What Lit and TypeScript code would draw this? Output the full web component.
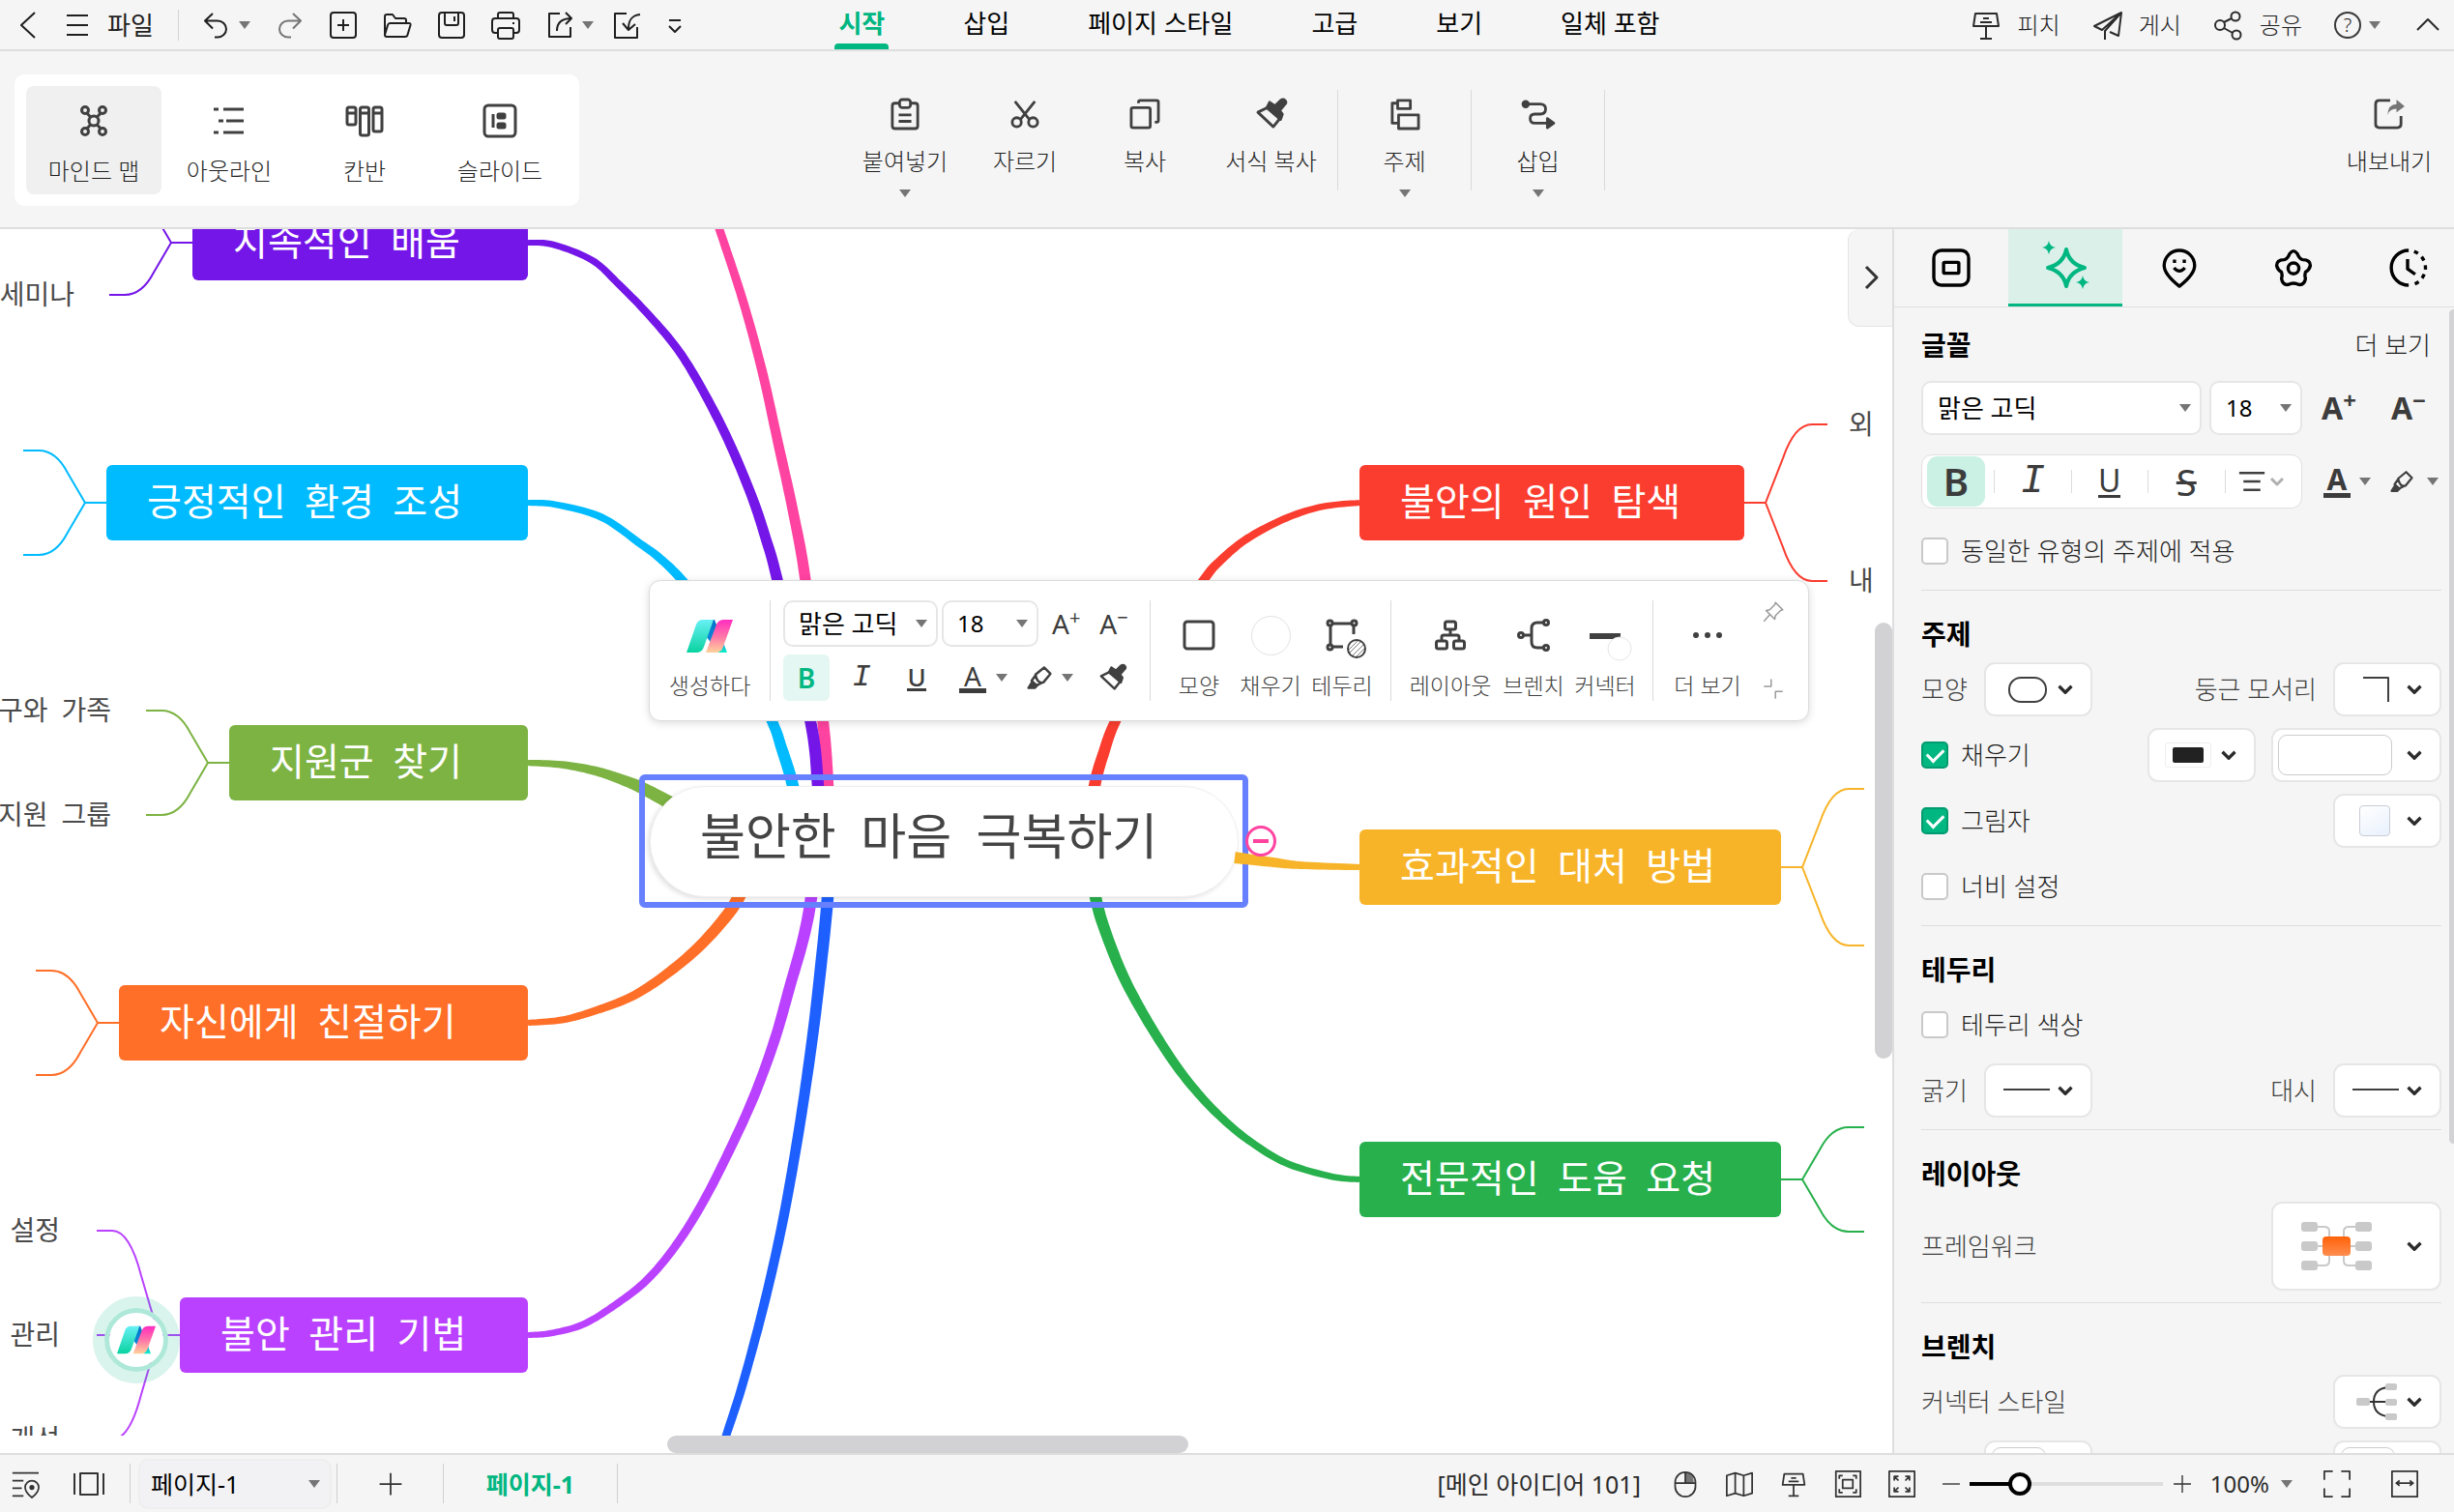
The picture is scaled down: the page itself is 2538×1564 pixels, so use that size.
import { LitElement, html, css, svg, nothing } from "lit";
import { customElement } from "lit/decorators.js";
import { styleMap } from "lit/directives/style-map.js";
import { classMap } from "lit/directives/class-map.js";

/* ---------- icons (32 x 32 grid, drawn with currentColor) ---------- */

const ICONS: Record<string, unknown> = {
  back: svg`<path d="M23 3 9 16l14 13" />`,
  menu: svg`<path d="M5 6h22M5 16h22M5 26h22" />`,
  undo: svg`<path d="M12 4 4 11.500l8 8M4.500 11.500H17a9 8.500 0 0 1 0 17h-3" />`,
  redo: svg`<path d="m20 4 8 7.500-8 8M27.500 11.500H15a9 8.500 0 0 0 0 17h3" />`,
  add: svg`<rect x="3" y="3" width="26" height="26" rx="3" /><path d="M16 10v12M10 16h12" />`,
  folder: svg`<path d="M3 27V7q0-2 2-2h6l3 4h9q2 0 2 2v3M3 26l3-10q.600-2 2.500-2H28q2 0 1.500 2l-3 10q-.500 2-2.500 2H5q-2 0-2-2" />`,
  save: svg`<rect x="3" y="3" width="26" height="26" rx="3" /><path d="M9 3v11q0 2 2 2h10q2 0 2-2V3M19 7v5" />`,
  print: svg`<path d="M8 9V5q0-2 2-2h12q2 0 2 2v4M8 24H5q-3 0-3-3v-9q0-3 3-3h22q3 0 3 3v9q0 3-3 3h-3M24 13v2" /><rect x="8" y="19" width="16" height="11" rx="2" />`,
  shareOut: svg`<path d="M16 4H5v24h22V18M13 22c0-8 4-13 15-13M22 3l6 6-6 6" />`,
  importIn: svg`<path d="M16 4H4v25h23V18M30 5C21 6 18 11 18 20M12 14l6 7 7-6" />`,
  more: svg`<path d="M10 11h12M10 17l6 6 6-6" />`,
  pitch: svg`<path d="M5 4h22l2 13H3zM16 17v13M10 30h12M13 9h6M10 13h12" />`,
  plane: svg`<path d="M30 3 2 17l8 4zM30 3 13 22v9M30 3l-3 24-9-4" />`,
  share: svg`<circle cx="7" cy="16" r="5" /><circle cx="23" cy="7" r="4.500" /><circle cx="24" cy="26" r="4.500" /><path d="m11 13 8-4M11 19l9 5" />`,
  up: svg`<path d="m5 21 11-11 11 11" />`,
  right: svg`<path d="m11 5 11 11-11 11" />`,
  mindmap: svg`<circle cx="16" cy="16" r="5" /><circle cx="7" cy="5" r="3.500" /><circle cx="25" cy="5" r="3.500" /><circle cx="7" cy="27" r="3.500" /><circle cx="25" cy="27" r="3.500" /><path d="m9 8 3.500 4M23 8l-3.500 4M9 24l3.500-4M23 24l-3.500-4" />`,
  outline: svg`<path d="M0 4h5M10 4h21M5 16h5M13 16h18M0 28h5M10 28h21" />`,
  kanban: svg`<rect x="-2" y="2" width="9" height="18" rx="2" /><rect x="11.500" y="2" width="9" height="29" rx="2" /><rect x="25" y="2" width="9" height="25" rx="2" /><path d="M-2 8h9M11.500 8h9M25 8h9" />`,
  slide: svg`<rect x="0" y="0" width="32" height="32" rx="4" /><path d="M9 9v14" /><g class="solid"><rect x="14" y="9" width="7" height="4" rx="1" /><rect x="14" y="19" width="7" height="4" rx="1" /></g>`,
  paste: svg`<path d="M10 4H5q-3 0-3 3v22q0 3 3 3h22q3 0 3-3V7q0-3-3-3h-5" /><rect x="10" y="0" width="12" height="9" rx="3" /><path d="M9 17h14M9 24h14" />`,
  cut: svg`<path d="M5 2 21 22M27 2 11 22" /><circle cx="7" cy="25" r="5" /><circle cx="25" cy="25" r="5" />`,
  copy: svg`<rect x="1" y="9" width="21" height="22" rx="2" /><path d="M9 4V3q0-2 2-2h18q2 0 2 2v20q0 2-2 2h-2" />`,
  brush: svg`<path d="m1 14 10-5 15 11-8 10z" /><path class="fill" d="m11 9 3-6 6 4 6-6q3-2 5 0t0 4l-6 7 3 4-2 6z" />`,
  topic: svg`<rect x="8" y="1" width="14" height="9" /><path d="M8 4H2v22h6" /><rect x="9" y="17" width="22" height="15" />`,
  connector: svg`<circle class="fill" cx="2" cy="5" r="3" /><path d="M3 5h15q6 0 6 5.500T18 16h-6q-5 0-5 5t5 5h14" /><path class="fill" d="m26 21 7 5-7 5z" />`,
  exportBox: svg`<path d="M17 1H5Q1 1 1 5v22q0 4 4 4h20q4 0 4-4V18" /><path class="soft" d="M14 17q1-12 10-12V0l9 7.500-9 6.500v-4q-8 0-10 7z" />`,
  frame: svg`<rect x="0" y="0" width="32" height="32" rx="7" /><rect x="9" y="11" width="14" height="10" rx="1" />`,
  pin: svg`<path d="M16 33Q2 22 2 14a14 14 0 0 1 28 0q0 8-14 19z" /><path d="M11.500 8.500v3M20.500 8.500v3M11 16q5 6 10 0" />`,
  flower: svg`<path d="M12.500 3Q16-2 19.500 3q2 5 5 5.500 7 0 7 5.500-1 4-4.500 6-1 3 0 6-1 6-6 5.500-5-2.500-10 0-5 .500-6-5.500 1-3 0-6-3.500-2-4.500-6 0-5.500 7-5.500 3-.500 5-5.500z" /><circle cx="16" cy="16.500" r="5" />`,
  clock: svg`<path d="M17 0a16 16 0 0 0 0 32M16 8v9l7 5" /><path stroke-dasharray="4 4.500" d="M22 1a16 16 0 0 1 0 30" />`,
  box: svg`<rect x="1" y="2" width="30" height="28" rx="3" />`,
  tree: svg`<rect x="10.500" y="2" width="11" height="8" rx="2" /><rect x="1.500" y="22" width="11" height="8" rx="2" /><rect x="19.500" y="22" width="11" height="8" rx="2" /><path d="M16 10v6M7 22v-4q0-2 2-2h14q2 0 2 2v4" />`,
  branch: svg`<circle cx="3" cy="16" r="2.500" /><circle cx="29" cy="3" r="2.500" /><circle cx="29" cy="29" r="2.500" /><path d="M6 16h8M26 3h-6q-6 0-6 6v14q0 6 6 6h6" />`,
  dots: svg`<g class="fill"><circle cx="4" cy="16" r="1.500" /><circle cx="16" cy="16" r="1.500" /><circle cx="28" cy="16" r="1.500" /></g>`,
  tack: svg`<path d="m19 3 10 10-3 1-7 7-1 5L6 14l5-1 7-7zM11 20l-8 9" />`,
  shrink: svg`<path d="M3 12h10V2M29 19H19v10" />`,
  pen: svg`<path d="m11 12 11-9 8 8-9 11q-8 2-10-10zM11 13l-5 7 6 6 8-4" /><path class="fill" d="M7 21 2 29h8l3-3z" />`,
  align: svg`<path d="M1 6h30M6 16h20M6 26h20" />`,
  oval: svg`<rect x="-3" y="4" width="38" height="25" rx="12" />`,
  corner: svg`<path d="M2 4h26v25" />`,
  line: svg`<path d="M-9 15h48" />`,
  chev: svg`<path d="m8 12 8 8 8-8" />`,
  mapPin: svg`<path d="M1 3h31M1 12h13M1 21h11M1 30h13" /><path d="M24 32q-8-6-8-12a8 8 0 0 1 16 0q0 6-8 12z" /><circle class="fill" cx="24" cy="20" r="2" />`,
  slides: svg`<rect x="7" y="5" width="18" height="22" /><path d="M1 5v22M31 5v22" />`,
  plus: svg`<path d="M16 3v26M3 16h26" />`,
  minus: svg`<path d="M3 16h26" />`,
  mouse: svg`<path class="soft" d="M16 2q10 1 10 13H16z" /><rect x="4" y="2" width="24" height="29" rx="12" /><path d="M4 15h24M16 2v13" />`,
  map: svg`<path d="m1 6 10-3 10 3 10-3v24l-10 3-10-3-10 3zM11 3v24M21 6v24" />`,
  fit: svg`<rect x="2" y="1" width="29" height="30" /><rect x="10" y="11" width="12" height="10" /><path d="M6 10V6h4M22 6h4v4M6 22v4h4M26 22v4h-4" />`,
  expand: svg`<rect x="1" y="1" width="30" height="30" /><path d="M7 12V7h5M7 7l5 5M20 7h5v5M25 7l-5 5M7 20v5h5M7 25l5-5M25 20v5h-5M25 25l-5-5" />`,
  full: svg`<path d="M1 11V1h10M21 1h10v10M1 21v10h10M31 21v10H21" />`,
  wide: svg`<rect x="1" y="1" width="30" height="30" /><path d="M7 15h18M10 12l-4 3 4 3M22 12l4 3-4 3" />`,
};

const icon = (name: string, cls = "") =>
  html`<svg class="ico ${cls}" viewBox="0 0 32 32" aria-hidden="true">${ICONS[name]}</svg>`;

const tri = html`<svg class="tri" viewBox="0 0 12 8" aria-hidden="true"><path d="M0 0h12L6 8z" /></svg>`;

const logo = (id: string) => html`<svg class="logo" viewBox="0 0 48 34" aria-hidden="true">
  <defs>
    <linearGradient id="${id}a" x1="0" y1="0" x2="0" y2="1"><stop offset="0" stop-color="#66f0f4" /><stop offset="1" stop-color="#0ad3a0" /></linearGradient>
    <linearGradient id="${id}b" x1="0" y1="0" x2="0" y2="1"><stop offset="0" stop-color="#0672c8" /><stop offset=".6" stop-color="#0a86d8" /><stop offset="1" stop-color="#0ef0cc" /></linearGradient>
    <linearGradient id="${id}c" x1="0" y1="0" x2="0" y2="1"><stop offset="0" stop-color="#ff2cc0" /><stop offset=".5" stop-color="#ff74a8" /><stop offset="1" stop-color="#ffd19a" /></linearGradient>
  </defs>
  <path fill="url(#${id}b)" d="M26 0h3l13 34h-9L20 17z" />
  <path fill="url(#${id}a)" d="M17 0h11L18 28q-2 6-8 6H0L10 5q2-5 7-5z" />
  <path fill="url(#${id}c)" d="M39 0h9L38 28q-2 6-8 6H20L31 5q2-5 8-5z" />
</svg>`;

const base = css`
  :host {
    display: block;
    box-sizing: border-box;
    font-family: "Noto Sans", "Noto Sans CJK KR", sans-serif;
    font-size: 24px;
    font-weight: 300;
    line-height: 32px;
    color: #1f1f1f;
  }
  * {
    box-sizing: border-box;
  }
  button,
  select {
    font: inherit;
    color: inherit;
    background: none;
    border: 0;
    padding: 0;
    margin: 0;
    white-space: nowrap;
  }
  .ico {
    width: 28px;
    height: 28px;
    flex: none;
    fill: none;
    stroke: currentColor;
    stroke-width: 2;
    stroke-linejoin: round;
    overflow: visible;
    display: block;
  }
  .ico .fill,
  .ico .solid rect {
    fill: currentColor;
  }
  .ico .soft {
    fill: #757575;
    stroke: none;
  }
  .tri {
    width: 12px;
    height: 8px;
    flex: none;
    fill: #757575;
    display: block;
  }
  .row {
    display: flex;
    align-items: center;
  }
  .pick {
    position: relative;
    display: flex;
    align-items: center;
  }
  .pick select {
    appearance: none;
    width: 100%;
    height: 100%;
    background: #fff;
    border: 2px solid #e6e6e6;
    border-radius: 10px;
    color: #000;
    font-weight: 400;
  }
  .pick .tri {
    position: absolute;
    right: 11px;
    pointer-events: none;
  }
  .glyph {
    line-height: 1;
    font-family: "Noto Sans", sans-serif;
    color: #3c3c3c;
    display: block;
  }
`;

/* ---------- title bar ---------- */

@customElement("top-bar")
export class TopBar extends LitElement {
  static styles = [
    base,
    css`
      :host {
        border-bottom: 2px solid #dedede;
      }
      header {
        display: grid;
        grid-template-columns: 1fr auto 1fr;
        height: 51px;
      }
      .ico {
        width: 32px;
        height: 32px;
      }
      .left {
        display: flex;
        align-items: center;
        padding-left: 13px;
      }
      .left button,
      .right button {
        display: flex;
        align-items: center;
      }
      .file {
        gap: 15px;
        margin-left: 19px;
        font-size: 26px;
        font-weight: 400;
      }
      .sep {
        width: 1px;
        height: 32px;
        background: #d4d4d4;
        margin: 0 23px 0 25px;
      }
      .tools {
        display: flex;
        align-items: center;
        gap: 24px;
      }
      .tools .split {
        gap: 7px;
      }
      .tools .split.wide,
      .tools .import {
        margin-right: -6px;
      }
      .dim {
        color: #757575;
      }
      nav {
        display: flex;
        gap: 81px;
        padding-left: 46px;
        font-size: 26px;
        font-weight: 400;
      }
      nav a {
        color: #000;
        text-decoration: none;
        line-height: 48px;
        height: 51px;
        position: relative;
        white-space: nowrap;
      }
      nav a.on {
        color: #00b681;
        font-weight: 700;
      }
      nav a.on::after {
        content: "";
        position: absolute;
        left: -4px;
        right: -4px;
        bottom: 0;
        height: 6px;
        background: #00b681;
        border-radius: 4px 4px 0 0;
      }
      .right {
        display: flex;
        align-items: center;
        justify-content: flex-end;
        gap: 33px;
        padding-right: 11px;
      }
      .right button {
        gap: 16px;
      }
      .right .help {
        gap: 8px;
      }
      .q {
        width: 28px;
        height: 28px;
        border: 2px solid #3a3a3a;
        border-radius: 50%;
        font-size: 20px;
        line-height: 24px;
        text-align: center;
      }
      .right .ico {
        color: #2b2b2b;
      }
    `,
  ];
  render() {
    const tabs = ["시작", "삽입", "페이지 스타일", "고급", "보기", "일체 포함"];
    return html`<header>
      <div class="left">
        <button aria-label="뒤로">${icon("back")}</button>
        <button class="file">${icon("menu")}파일</button>
        <span class="sep"></span>
        <div class="tools">
          <button class="split" aria-label="실행 취소">${icon("undo")}${tri}</button>
          <button class="dim" aria-label="다시 실행">${icon("redo")}</button>
          <button aria-label="새로 만들기">${icon("add")}</button>
          <button aria-label="열기">${icon("folder")}</button>
          <button aria-label="저장">${icon("save")}</button>
          <button aria-label="인쇄">${icon("print")}</button>
          <button class="split wide" aria-label="내보내기">${icon("shareOut")}${tri}</button>
          <button class="import" aria-label="가져오기">${icon("importIn")}</button>
          <button aria-label="더 많은 도구">${icon("more")}</button>
        </div>
      </div>
      <nav>${tabs.map((t, i) => html`<a href="#" class=${i === 0 ? "on" : ""}>${t}</a>`)}</nav>
      <div class="right">
        <button>${icon("pitch")}피치</button>
        <button>${icon("plane")}게시</button>
        <button>${icon("share")}공유</button>
        <button class="help" aria-label="도움말"><span class="q">?</span>${tri}</button>
        <button aria-label="리본 접기">${icon("up")}</button>
      </div>
    </header>`;
  }
}

/* ---------- ribbon ---------- */

@customElement("tool-ribbon")
export class ToolRibbon extends LitElement {
  static styles = [
    base,
    css`
      :host {
        border-bottom: 2px solid #dedede;
      }
      .ribbon {
        display: grid;
        grid-template-columns: 1fr auto 1fr;
        height: 182px;
        padding: 24px 15px 20px;
      }
      .views {
        justify-self: start;
        align-self: start;
        display: flex;
        padding: 12px;
        background: #fff;
        border-radius: 10px;
      }
      button {
        display: flex;
        flex-direction: column;
        align-items: center;
        color: #1f1f1f;
      }
      .ico {
        color: #404040;
        stroke-width: 3;
      }
      .views button {
        width: 140px;
        height: 112px;
        padding-top: 20px;
        gap: 20px;
        border-radius: 8px;
      }
      .views button.on {
        background: #f0f0f1;
      }
      .views .ico {
        width: 32px;
        height: 32px;
      }
      .acts {
        display: flex;
        padding: 16px 4px 0 0;
      }
      .acts button {
        width: 124px;
        height: 104px;
        padding-top: 10px;
        gap: 18px;
      }
      .acts button.fmt,
      .acts button.grp {
        width: 138px;
        border-right: 1px solid #dadada;
      }
      .acts .ico,
      .out .ico {
        width: 30px;
        height: 30px;
      }
      .acts .tri {
        margin-top: -5px;
      }
      .out {
        justify-self: end;
        width: 104px;
        padding-top: 26px;
        gap: 18px;
      }
    `,
  ];
  render() {
    const views = [["mindmap", "마인드 맵"], ["outline", "아웃라인"], ["kanban", "칸반"], ["slide", "슬라이드"]];
    const acts: [string, string, string, boolean][] = [
      ["paste", "붙여넣기", "", true],
      ["cut", "자르기", "", false],
      ["copy", "복사", "", false],
      ["brush", "서식 복사", "fmt", false],
      ["topic", "주제", "grp", true],
      ["connector", "삽입", "grp", true],
    ];
    return html`<div class="ribbon">
      <div class="views">
        ${views.map(([i, t], n) => html`<button class=${n === 0 ? "on" : ""}>${icon(i)}<span>${t}</span></button>`)}
      </div>
      <div class="acts">
        ${acts.map(([i, t, c, d]) => html`<button class=${c}>${icon(i)}<span>${t}</span>${d ? tri : nothing}</button>`)}
      </div>
      <button class="out">${icon("exportBox")}<span>내보내기</span></button>
    </div>`;
  }
}

/* ---------- mind map ---------- */

type Pt = [number, number];

/* The map is scrolled: its own coordinates start this far above the stage. */
const SCROLL_Y = 237;

/* A smooth band through the points, growing from width a to width b. */
function band(pts: Pt[], a: number, b: number): string {
  const line: Pt[] = [];
  const steps = 10;
  for (let i = 0; i < pts.length - 1; i++) {
    const p0 = pts[Math.max(i - 1, 0)];
    const p1 = pts[i];
    const p2 = pts[i + 1];
    const p3 = pts[Math.min(i + 2, pts.length - 1)];
    for (let s = i === 0 ? 0 : 1; s <= steps; s++) {
      const t = s / steps;
      const at = (k: 0 | 1) =>
        0.5 *
        (2 * p1[k] +
          (p2[k] - p0[k]) * t +
          (2 * p0[k] - 5 * p1[k] + 4 * p2[k] - p3[k]) * t * t +
          (3 * p1[k] - p0[k] - 3 * p2[k] + p3[k]) * t * t * t);
      line.push([at(0), at(1)]);
    }
  }
  const left: string[] = [];
  const right: string[] = [];
  line.forEach(([x, y], i) => {
    const [ax, ay] = line[Math.max(i - 1, 0)];
    const [bx, by] = line[Math.min(i + 1, line.length - 1)];
    const len = Math.hypot(bx - ax, by - ay) || 1;
    const half = (a + ((b - a) * i) / (line.length - 1)) / 2;
    const nx = (-(by - ay) / len) * half;
    const ny = ((bx - ax) / len) * half;
    left.push(`${(x + nx).toFixed(1)} ${(y + ny).toFixed(1)}`);
    right.unshift(`${(x - nx).toFixed(1)} ${(y - ny).toFixed(1)}`);
  });
  return `M${left.concat(right).join("L")}Z`;
}

/* A thin child branch that leaves a node's edge and ends dy above or below it. */
function twig(x: number, y: number, dir: 1 | -1, dy: number): string {
  const j = x + dir * 22;
  if (dy === 0) return `M${x} ${y}H${j + dir * 64}`;
  return `M${x} ${y}H${j}L${j + dir * 18} ${y + dy * 0.57}Q${j + dir * 30} ${y + dy} ${j + dir * 48} ${y + dy}H${j + dir * 64}`;
}

interface Topic {
  text: string;
  x: number;
  y: number;
  w: number;
  color: string;
  side: 1 | -1;
  twigs: number[];
}

const TOPICS: Topic[] = [
  { text: "지속적인 배움", x: 199, y: 212, w: 347, color: "#7416e8", side: -1, twigs: [-54, 54] },
  { text: "긍정적인 환경 조성", x: 110, y: 481, w: 436, color: "#00bbff", side: -1, twigs: [-54, 54] },
  { text: "지원군 찾기", x: 237, y: 750, w: 309, color: "#7cb342", side: -1, twigs: [-54, 54] },
  { text: "자신에게 친절하기", x: 123, y: 1019, w: 423, color: "#ff6f28", side: -1, twigs: [-54, 54] },
  { text: "불안 관리 기법", x: 186, y: 1342, w: 360, color: "#b941ff", side: -1, twigs: [-108, 0, 108] },
  { text: "불안의 원인 탐색", x: 1406, y: 481, w: 398, color: "#fb3d30", side: 1, twigs: [-81, 81] },
  { text: "효과적인 대처 방법", x: 1406, y: 858, w: 436, color: "#f7b428", side: 1, twigs: [-81, 81] },
  { text: "전문적인 도움 요청", x: 1406, y: 1181, w: 436, color: "#27b04b", side: 1, twigs: [-54, 54] },
];

const BANDS: { color: string; from: number; to: number; pts: Pt[] }[] = [
  { color: "#ff43a0", from: 8, to: 13, pts: [[737, 217], [744, 237], [768, 310], [788, 383], [804, 455], [820, 528], [833, 600], [851, 745], [856, 813], [858, 870]] },
  { color: "#7416e8", from: 6, to: 13, pts: [[546, 251], [572, 253], [612, 269], [640, 294], [673, 328], [702, 363], [727, 404], [753, 455], [777, 512], [792, 557], [804, 600], [838, 745], [846, 813], [850, 870]] },
  { color: "#00bbff", from: 6, to: 13, pts: [[546, 520], [575, 522], [622, 535], [663, 563], [683, 578], [708, 603], [762, 668], [798, 745], [808, 773], [820, 813], [830, 870]] },
  { color: "#7cb342", from: 6, to: 14, pts: [[546, 789], [581, 791], [614, 797], [642, 806], [664, 815], [694, 831]] },
  { color: "#ff6f28", from: 6, to: 14, pts: [[546, 1058], [581, 1055], [614, 1046], [653, 1031], [686, 1010], [719, 983], [746, 954], [764, 928], [785, 880]] },
  { color: "#b941ff", from: 6, to: 13, pts: [[546, 1381], [570, 1379], [603, 1370], [636, 1350], [668, 1325], [697, 1291], [724, 1249], [751, 1197], [779, 1136], [801, 1076], [817, 1020], [831, 970], [839, 928], [845, 870]] },
  { color: "#1e60ff", from: 8, to: 13, pts: [[746, 1502], [751, 1485], [768, 1432], [790, 1350], [809, 1266], [825, 1177], [838, 1090], [847, 1017], [856, 928], [858, 870]] },
  { color: "#fb3d30", from: 6, to: 13, pts: [[1406, 520], [1368, 524], [1330, 536], [1290, 557], [1262, 580], [1244, 601], [1188, 680], [1154, 745], [1142, 777], [1132, 813], [1124, 870]] },
  { color: "#27b04b", from: 6, to: 13, pts: [[1406, 1220], [1377, 1217], [1330, 1203], [1292, 1180], [1262, 1155], [1234, 1125], [1210, 1093], [1182, 1048], [1160, 1006], [1142, 960], [1133, 928], [1122, 870]] },
];

const LEAVES: { text: string; x: number; y: number; side: 1 | -1 }[] = [
  { text: "세미나", x: 77, y: 303, side: -1 },
  { text: "구와 가족", x: 115, y: 733, side: -1 },
  { text: "지원 그룹", x: 115, y: 841, side: -1 },
  { text: "설정", x: 62, y: 1271, side: -1 },
  { text: "관리", x: 62, y: 1379, side: -1 },
  { text: "개선", x: 62, y: 1487, side: -1 },
  { text: "외", x: 1912, y: 437, side: 1 },
  { text: "내", x: 1912, y: 599, side: 1 },
];

@customElement("mind-stage")
export class MindStage extends LitElement {
  static styles = [
    base,
    css`
      :host {
        position: relative;
        background: #fff;
        overflow: hidden;
      }
      .map {
        position: absolute;
        inset: 0 18px 18px 0;
        overflow: hidden;
        font-family: "Noto Sans Mono CJK KR", "Noto Sans CJK KR", sans-serif;
      }
      .links {
        position: absolute;
        inset: 0;
        width: 100%;
        height: 100%;
      }
      .topic {
        position: absolute;
        height: 78px;
        padding-left: 42px;
        border-radius: 6px;
        color: #fff;
        font-size: 39px;
        line-height: 70px;
        white-space: nowrap;
      }
      .leaf {
        position: absolute;
        height: 32px;
        font-size: 28px;
        line-height: 32px;
        color: #4a4a4a;
        white-space: nowrap;
      }
      .leaf.before {
        transform: translateX(-100%);
      }
      .root {
        position: absolute;
        left: 672px;
        top: 576px;
        width: 609px;
        height: 115px;
        padding-left: 51px;
        border-radius: 58px;
        background: #fff;
        border: 1px solid #f0f0f0;
        box-shadow: -2px 2px 5px rgba(0, 0, 0, 0.12);
        font-size: 51px;
        line-height: 96px;
        color: #444;
        white-space: nowrap;
      }
      .select {
        position: absolute;
        left: 661px;
        top: 564px;
        width: 630px;
        height: 138px;
        border: 6px solid #6680ff;
        border-radius: 6px;
      }
      .fold {
        position: absolute;
        left: 1288px;
        top: 617px;
        width: 32px;
        height: 32px;
        border: 3px solid #ff43a0;
        border-radius: 50%;
        background: #fff;
        display: grid;
        place-items: center;
      }
      .fold::before {
        content: "";
        width: 16px;
        height: 4px;
        background: #ff43a0;
      }
      .ai {
        position: absolute;
        left: 96px;
        top: 1104px;
        width: 90px;
        height: 90px;
        border: 12px solid rgba(0, 182, 129, 0.15);
        border-radius: 50%;
        padding: 0;
      }
      .ai span {
        display: grid;
        place-items: center;
        width: 66px;
        height: 66px;
        border: 5px solid #aee8d8;
        border-radius: 50%;
        background: #fff;
        background-clip: padding-box;
      }
      .logo {
        width: 40px;
        height: 30px;
      }
      .vbar,
      .hbar {
        position: absolute;
        background: #d2d2d4;
        border-radius: 9px;
      }
      .vbar {
        right: 0;
        top: 407px;
        width: 18px;
        height: 451px;
      }
      .hbar {
        left: 690px;
        bottom: 0;
        width: 539px;
        height: 18px;
      }
      .fold-panel {
        position: absolute;
        right: 0;
        top: 0;
        width: 46px;
        height: 101px;
        background: #f5f5f5;
        border: 1px solid #e4e4e4;
        border-width: 0 0 1px 1px;
        border-radius: 12px 0 0 12px;
        display: grid;
        place-items: center;
        color: #333;
      }
      .fold-panel .ico {
        width: 32px;
        height: 32px;
        stroke-width: 3;
      }
    `,
  ];
  render() {
    return html`
      <div class="map">
        <svg class="links" aria-hidden="true">
          <g transform="translate(0 ${-SCROLL_Y})">
            ${TOPICS.map((t) =>
              t.twigs.map(
                (d) =>
                  svg`<path d=${twig(t.side < 0 ? t.x : t.x + t.w, t.y + 39, t.side, d)} fill="none" stroke=${t.color} stroke-width="2" />`
              )
            )}
            ${BANDS.map((b) => svg`<path d=${band(b.pts, b.from, b.to)} fill=${b.color} />`)}
          </g>
        </svg>
        ${TOPICS.map(
          (t) => html`<div
            class="topic"
            style=${styleMap({ left: `${t.x}px`, top: `${t.y - SCROLL_Y}px`, width: `${t.w}px`, background: t.color })}
          >${t.text}</div>`
        )}
        ${LEAVES.map(
          (l) => html`<div
            class=${classMap({ leaf: true, before: l.side < 0 })}
            style=${styleMap({ left: `${l.x}px`, top: `${l.y - SCROLL_Y - 16}px` })}
          >${l.text}</div>`
        )}
        <div class="select"></div>
        <div class="root">불안한 마음 극복하기</div>
        <svg class="links" aria-hidden="true">
          <path
            transform="translate(0 ${-SCROLL_Y})"
            d=${band([[1406, 897], [1345, 895], [1317, 892], [1277, 887]], 6, 12)}
            fill="#f7b428"
          />
        </svg>
        <button class="fold" aria-label="가지 접기"></button>
        <button class="ai" aria-label="AI 도우미"><span>${logo("m")}</span></button>
      </div>
      <div class="vbar"></div>
      <div class="hbar"></div>
      <button class="fold-panel" aria-label="패널 접기">${icon("right")}</button>
      <float-bar></float-bar>
    `;
  }
}

/* ---------- floating format bar ---------- */

@customElement("float-bar")
export class FloatBar extends LitElement {
  static styles = [
    base,
    css`
      :host {
        position: absolute;
        left: 671px;
        top: 363px;
        width: 1200px;
        height: 146px;
        padding: 20px 0;
        display: flex;
        background: #fff;
        border: 1px solid #dcdcdc;
        border-radius: 12px;
        box-shadow: 0 2px 8px rgba(0, 0, 0, 0.14);
        font-size: 23px;
        color: #404040;
      }
      .group {
        display: flex;
        border-left: 1px solid #dadada;
        height: 104px;
      }
      .tool {
        display: flex;
        flex-direction: column;
        align-items: center;
        justify-content: space-between;
        height: 104px;
        padding-top: 20px;
      }
      .tool .ico {
        stroke-width: 3;
        width: 32px;
        height: 32px;
      }
      .tool.ai {
        width: 124px;
      }
      .tool.ai .logo {
        width: 48px;
        height: 34px;
      }
      .shape .tool {
        width: 74px;
      }
      .shape {
        padding: 0 13px;
      }
      .link {
        padding: 0 12px;
      }
      .link .tool {
        width: 74px;
      }
      .link .tool.w {
        width: 98px;
      }
      .tool.more {
        width: 112px;
      }
      .text {
        flex-direction: column;
        justify-content: space-between;
        width: 393px;
        padding-left: 13px;
      }
      .row {
        height: 48px;
      }
      .pick {
        height: 48px;
      }
      .pick.f {
        width: 160px;
        margin-right: 4px;
      }
      .pick.s {
        width: 100px;
      }
      .pick select {
        padding-left: 14px;
      }
      .pick.f select {
        font-size: 26px;
      }
      .pick.s select {
        font-size: 24px;
      }
      .size {
        display: flex;
        margin-left: 14px;
        font-weight: 400;
      }
      .size + .size {
        margin-left: 20px;
      }
      .size .glyph {
        font-size: 28px;
      }
      .size .mark {
        font-size: 20px;
        line-height: 16px;
        color: #3c3c3c;
      }
      .b,
      .i,
      .u {
        width: 48px;
        height: 48px;
        display: grid;
        place-items: center;
        border-radius: 6px;
      }
      .b {
        background: #e4f7f2;
      }
      .b .glyph {
        color: #00b681;
        font-size: 28px;
        font-weight: 600;
      }
      .i {
        width: 66px;
      }
      .i .glyph {
        font: italic 32px "Liberation Mono", monospace;
        line-height: 1;
      }
      .u .glyph {
        font-size: 26px;
        font-weight: 500;
        line-height: 24px;
        border-bottom: 3px solid #3c3c3c;
      }
      .duo {
        display: flex;
        align-items: center;
        gap: 10px;
        margin-left: 20px;
        font-weight: 400;
      }
      .duo.last {
        margin-left: 28px;
      }
      .a .glyph {
        font-size: 28px;
        line-height: 26px;
        width: 28px;
        text-align: center;
        border-bottom: 5px solid #3c3c3c;
      }
      .duo .ico {
        width: 26px;
        height: 26px;
        stroke-width: 3;
      }
      .disc {
        width: 41px;
        height: 41px;
        border: 1px solid #e2e2e2;
        border-radius: 50%;
        margin-top: -4px;
      }
      .side {
        display: flex;
        flex-direction: column;
        justify-content: space-between;
        color: #9a9a9a;
      }
      .side .ico {
        width: 24px;
        height: 24px;
      }
    `,
  ];
  render() {
    return html`
      <button class="tool ai">${logo("f")}<span>생성하다</span></button>
      <div class="group text">
        <div class="row">
          <div class="pick f"><select aria-label="글꼴"><option>맑은 고딕</option></select>${tri}</div>
          <div class="pick s"><select aria-label="글꼴 크기"><option>18</option></select>${tri}</div>
          <button class="size"><span class="glyph">A</span><span class="mark">+</span></button>
          <button class="size"><span class="glyph">A</span><span class="mark">−</span></button>
        </div>
        <div class="row">
          <button class="b"><span class="glyph">B</span></button>
          <button class="i"><span class="glyph">I</span></button>
          <button class="u"><span class="glyph">U</span></button>
          <button class="duo a"><span class="glyph">A</span>${tri}</button>
          <button class="duo" aria-label="강조 색">${icon("pen")}${tri}</button>
          <button class="duo last" aria-label="서식 복사">${icon("brush")}</button>
        </div>
      </div>
      <div class="group shape">
        <button class="tool">${icon("box")}<span>모양</span></button>
        <button class="tool"><i class="disc"></i><span>채우기</span></button>
        <button class="tool">
          <svg class="ico" viewBox="0 0 32 32" aria-hidden="true">
            <path d="M4 7v18M28 7v8M7 4h18M7 28h10" />
            <circle cx="3.500" cy="3.500" r="2.500" /><circle cx="28.500" cy="3.500" r="2.500" /><circle cx="3.500" cy="28.500" r="2.500" />
            <circle cx="31" cy="30" r="9" fill="#fff" stroke-width="2" />
            <path d="m23 31 9-9M24 34l11-11M27 37l11-11M31 38l8-8" stroke="#777" stroke-width="1" />
          </svg>
          <span>테두리</span>
        </button>
      </div>
      <div class="group link">
        <button class="tool w">${icon("tree")}<span>레이아웃</span></button>
        <button class="tool">${icon("branch")}<span>브렌치</span></button>
        <button class="tool">
          <svg class="ico" viewBox="0 0 32 32" aria-hidden="true">
            <path d="M0 17h32" stroke-width="6" />
            <circle cx="31" cy="30" r="12" fill="#fff" stroke="#e6e6e6" stroke-width="1" />
          </svg>
          <span>커넥터</span>
        </button>
      </div>
      <div class="group"><button class="tool more">${icon("dots")}<span>더 보기</span></button></div>
      <div class="side">
        <button aria-label="고정">${icon("tack")}</button>
        <button aria-label="축소">${icon("shrink")}</button>
      </div>
    `;
  }
}

/* ---------- format panel ---------- */

@customElement("format-panel")
export class FormatPanel extends LitElement {
  static styles = [
    base,
    css`
      :host {
        position: relative;
        display: flex;
        flex-direction: column;
        min-height: 0;
        border-left: 2px solid #dedede;
        overflow: hidden;
        font-size: 26px;
        color: #404040;
      }
      .tabs {
        display: flex;
        flex: none;
        height: 81px;
        border-bottom: 1px solid #dedede;
      }
      .tabs button {
        flex: none;
        width: 118px;
        height: 80px;
        display: grid;
        place-items: center;
        color: #000;
      }
      .tabs .ico {
        width: 36px;
        height: 36px;
        stroke-width: 3;
      }
      .tabs button.on {
        background: #dcf0ea;
        color: #00b681;
        border-bottom: 3px solid #00b681;
      }
      .tabs .spark {
        width: 48px;
        height: 48px;
      }
      .body {
        flex: 1;
        min-height: 0;
        overflow: hidden;
        padding: 0 13px 0 28px;
      }
      section {
        padding: 22px 0 6px;
        border-bottom: 1px solid #dedede;
      }
      section.first {
        padding-top: 16px;
      }
      .head {
        display: flex;
        justify-content: space-between;
        align-items: center;
        height: 46px;
        padding-right: 11px;
      }
      .first .head {
        margin-bottom: 4px;
      }
      h3 {
        margin: 0;
        font-size: 28px;
        font-weight: 700;
        color: #000;
      }
      .head a {
        color: #1f1f1f;
        text-decoration: none;
      }
      .line {
        display: flex;
        align-items: center;
        min-height: 68px;
      }
      .line.tall {
        min-height: 76px;
      }
      .line.big {
        min-height: 104px;
      }
      .push {
        margin-left: auto;
      }
      .gap {
        margin-left: 16px;
      }
      .lab {
        margin-right: 17px;
      }
      label {
        display: flex;
        align-items: center;
        gap: 13px;
        color: #1f1f1f;
      }
      input[type="checkbox"] {
        appearance: none;
        width: 28px;
        height: 28px;
        margin: 0;
        background: #fff;
        border: 2px solid #c9c9c9;
        border-radius: 5px;
        display: grid;
        place-items: center;
      }
      input[type="checkbox"]:checked {
        background: #00b681;
        border-color: #009c70;
      }
      input[type="checkbox"]:checked::before {
        content: "";
        width: 8px;
        height: 14px;
        margin-top: -4px;
        border: solid #fff;
        border-width: 0 3px 3px 0;
        transform: rotate(45deg);
      }
      .drop {
        width: 112px;
        height: 56px;
        flex: none;
        display: flex;
        align-items: center;
        justify-content: flex-end;
        padding-right: 13px;
        gap: 10px;
        background: #fff;
        border: 2px solid #e6e6e6;
        border-radius: 11px;
        color: #404040;
      }
      .drop.w {
        width: 176px;
        justify-content: space-between;
        padding-left: 5px;
      }
      .drop.h {
        height: 92px;
      }
      .drop .ico {
        width: 32px;
        height: 32px;
        stroke-width: 2;
      }
      .drop .ico.chev {
        width: 26px;
        height: 26px;
        stroke-width: 4;
        color: #2b2b2b;
      }
      .pick {
        height: 56px;
      }
      .pick.f {
        width: 290px;
        margin-right: 8px;
      }
      .pick.s {
        width: 96px;
      }
      .pick select {
        padding-left: 15px;
      }
      .pick.s select {
        font-size: 24px;
      }
      .size {
        display: flex;
        margin-left: 20px;
      }
      .size + .size {
        margin-left: 36px;
      }
      .size .glyph {
        font-size: 32px;
        font-weight: 700;
      }
      .size .mark {
        font-size: 24px;
        line-height: 16px;
        font-weight: 700;
        color: #3c3c3c;
      }
      .fmt {
        display: flex;
        align-items: center;
        width: 394px;
        height: 56px;
        background: #fff;
        border: 1px solid #e0e0e0;
        border-radius: 11px;
        padding-left: 5px;
      }
      .fmt button {
        flex: 1;
        height: 24px;
        display: flex;
        align-items: center;
        justify-content: center;
        border-left: 1px solid #dcdcdc;
        font-weight: 400;
      }
      .fmt button.b {
        flex: none;
        width: 60px;
        height: 52px;
        margin-right: 9px;
        background: #cbf0e4;
        border: 0;
        border-radius: 11px;
      }
      .b .glyph {
        font-size: 40px;
        font-weight: 600;
      }
      .i .glyph {
        font: italic 42px "Liberation Mono", monospace;
        line-height: 1;
      }
      .u .glyph {
        font-size: 32px;
        line-height: 30px;
        border-bottom: 3px solid #3c3c3c;
      }
      .st .glyph {
        font-size: 38px;
        text-decoration: line-through;
        text-decoration-thickness: 3px;
        padding: 0 3px;
      }
      .al .ico {
        stroke-width: 3;
      }
      .al .ico.chev {
        width: 24px;
        height: 24px;
        color: #b0b0b0;
        stroke-width: 4;
      }
      .duo {
        display: flex;
        align-items: center;
        gap: 9px;
        margin-left: 22px;
      }
      .duo + .duo {
        margin-left: 20px;
        gap: 14px;
      }
      .duo .glyph {
        font-size: 30px;
        font-weight: 700;
        line-height: 28px;
        width: 28px;
        text-align: center;
        border-bottom: 5px solid #3c3c3c;
      }
      .duo .ico {
        width: 24px;
        height: 24px;
        stroke-width: 3;
      }
      .ink {
        width: 48px;
        height: 26px;
        border: 1px solid #eee;
        border-radius: 3px;
        display: grid;
        place-items: center;
        margin-right: -5px;
      }
      .ink::before {
        content: "";
        width: 32px;
        height: 16px;
        border-radius: 2px;
        background: #222;
      }
      .well {
        width: 122px;
        height: 42px;
        border: 1px solid #ccc;
        border-radius: 9px;
      }
      .well.s {
        width: 56px;
        margin-right: -3px;
      }
      .shade {
        width: 32px;
        height: 32px;
        margin-right: 2px;
        border: 1px solid #c8ccd4;
        border-radius: 4px;
        background: linear-gradient(150deg, #fff, #e9f1fd);
      }
      .fw {
        width: 73px;
        height: 52px;
        margin-left: 24px;
      }
      .bs {
        width: 42px;
        height: 38px;
        margin-right: -5px;
      }
      .thumb {
        position: absolute;
        right: -4px;
        top: 83px;
        width: 9px;
        height: 863px;
        border-radius: 5px;
        background: #d3d3d5;
      }
    `,
  ];
  private drop(inner: unknown, name: string, cls = "") {
    return html`<button class="drop ${cls}" aria-label=${name}>${inner}${icon("chev", "chev")}</button>`;
  }
  render() {
    const side = (x: number) =>
      [6, 26, 46].map((y) => svg`<rect x=${x} y=${y - 5} width="17" height="10" rx="3" fill="#c9c9c9" />`);
    return html`
      <div class="tabs">
        <button aria-label="페이지">${icon("frame")}</button>
        <button class="on" aria-label="스타일">
          <svg class="ico spark" viewBox="0 0 48 48" aria-hidden="true">
            <path d="M24 5q3 15 19 19-16 4-19 19-3-15-19-19 16-4 19-19z" stroke-width="4" transform="translate(1 1)" />
            <path class="fill" stroke="none" d="M7-3q1 6 7 7-6 1-7 7-1-6-7-7 6-1 7-7zM42 33q1 6 7 7-6 1-7 7-1-6-7-7 6-1 7-7z" />
          </svg>
        </button>
        <button aria-label="마크">${icon("pin")}</button>
        <button aria-label="클립아트">${icon("flower")}</button>
        <button aria-label="기록">${icon("clock")}</button>
      </div>
      <div class="body">
        <section class="first">
          <div class="head"><h3>글꼴</h3><a href="#">더 보기</a></div>
          <div class="line tall">
            <div class="pick f"><select aria-label="글꼴"><option>맑은 고딕</option></select>${tri}</div>
            <div class="pick s"><select aria-label="글꼴 크기"><option>18</option></select>${tri}</div>
            <button class="size"><span class="glyph">A</span><span class="mark">+</span></button>
            <button class="size"><span class="glyph">A</span><span class="mark">−</span></button>
          </div>
          <div class="line tall">
            <div class="fmt">
              <button class="b"><span class="glyph">B</span></button>
              <button class="i"><span class="glyph">I</span></button>
              <button class="u"><span class="glyph">U</span></button>
              <button class="st"><span class="glyph">S</span></button>
              <button class="al" aria-label="정렬">${icon("align")}${icon("chev", "chev")}</button>
            </div>
            <button class="duo"><span class="glyph">A</span>${tri}</button>
            <button class="duo" aria-label="강조 색">${icon("pen")}${tri}</button>
          </div>
          <div class="line"><label><input type="checkbox" />동일한 유형의 주제에 적용</label></div>
        </section>
        <section>
          <div class="head"><h3>주제</h3></div>
          <div class="line">
            <span class="lab">모양</span>${this.drop(icon("oval"), "모양")}
            <span class="lab push">둥근 모서리</span>${this.drop(icon("corner"), "둥근 모서리")}
          </div>
          <div class="line">
            <label><input type="checkbox" checked />채우기</label>
            <span class="push">${this.drop(html`<i class="ink"></i>`, "무늬")}</span>
            <span class="gap">${this.drop(html`<i class="well"></i>`, "채우기 색", "w")}</span>
          </div>
          <div class="line">
            <label><input type="checkbox" checked />그림자</label>
            <span class="push">${this.drop(html`<i class="shade"></i>`, "그림자 모양")}</span>
          </div>
          <div class="line"><label><input type="checkbox" />너비 설정</label></div>
        </section>
        <section>
          <div class="head"><h3>테두리</h3></div>
          <div class="line"><label><input type="checkbox" />테두리 색상</label></div>
          <div class="line">
            <span class="lab">굵기</span>${this.drop(icon("line"), "굵기")}
            <span class="lab push">대시</span>${this.drop(icon("line"), "대시")}
          </div>
        </section>
        <section>
          <div class="head"><h3>레이아웃</h3></div>
          <div class="line big">
            <span>프레임워크</span>
            <span class="push">${this.drop(
              html`<svg class="fw" viewBox="0 0 73 52" aria-hidden="true">
                <defs><linearGradient id="hot" x1="0" y1="0" x2="0" y2="1"><stop offset="0" stop-color="#ff6208" /><stop offset="1" stop-color="#ff8d4f" /></linearGradient></defs>
                <path d="M16 6h8q5 0 5 5v30q0 5-5 5h-8M57 6h-8q-5 0-5 5v30q0 5 5 5h8M16 26h41" fill="none" stroke="#c9c9c9" stroke-width="2" />
                ${side(0)}${side(56)}
                <rect x="22" y="16" width="29" height="20" rx="4" fill="url(#hot)" />
              </svg>`,
              "프레임워크",
              "w h"
            )}</span>
          </div>
        </section>
        <section>
          <div class="head"><h3>브렌치</h3></div>
          <div class="line">
            <span>커넥터 스타일</span>
            <span class="push">${this.drop(
              html`<svg class="bs" viewBox="0 0 42 38" aria-hidden="true">
                <path d="M14 19h17M32 4Q18 6 18 19t14 15" fill="none" stroke="#333" stroke-width="2" />
                <rect x="0" y="15" width="14" height="8" rx="2" fill="#c9c9c9" />
                <rect x="30" y="0" width="12" height="7" rx="2" fill="#c9c9c9" />
                <rect x="30" y="16" width="12" height="7" rx="2" fill="#c9c9c9" />
                <rect x="30" y="31" width="12" height="7" rx="2" fill="#c9c9c9" />
              </svg>`,
              "커넥터 스타일"
            )}</span>
          </div>
          <div class="line">
            <span class="lab">색상</span>${this.drop(html`<i class="well s"></i>`, "색상")}
            <span class="push">${this.drop(html`<i class="well s"></i>`, "굵기")}</span>
          </div>
        </section>
      </div>
      <div class="thumb"></div>
    `;
  }
}

/* ---------- status bar ---------- */

@customElement("status-bar")
export class StatusBar extends LitElement {
  static styles = [
    base,
    css`
      :host {
        border-top: 2px solid #dedede;
        font-size: 25px;
        color: #2b2b2b;
      }
      footer {
        display: flex;
        align-items: center;
        height: 59px;
        padding: 0 37px 0 12px;
      }
      .ico {
        color: #333;
        display: block;
      }
      .slides {
        margin: 0 26px 0 36px;
      }
      .slides .ico {
        width: 32px;
        height: 32px;
      }
      .sep {
        width: 1px;
        height: 41px;
        background: #d0d0d0;
      }
      .pick {
        width: 200px;
        height: 52px;
        margin: 0 5px 0 8px;
      }
      .pick select {
        background: #f2f2f4;
        border-color: #eeeeef;
        padding-left: 11px;
      }
      .pick .tri {
        right: 12px;
      }
      .plus {
        width: 109px;
        display: grid;
        place-items: center;
      }
      .page {
        width: 179px;
        text-align: center;
        color: #00b681;
        font-weight: 700;
        text-decoration: none;
      }
      .right {
        display: flex;
        align-items: center;
        margin-left: auto;
      }
      .count {
        font-weight: 400;
      }
      .views {
        display: flex;
        gap: 28px;
        margin: 0 26px 0 32px;
      }
      .zoomer {
        display: flex;
        align-items: center;
      }
      input[type="range"] {
        appearance: none;
        width: 200px;
        height: 24px;
        margin: 0 9px 0 8px;
        background: linear-gradient(#000, #000) left center / 50px 4px no-repeat,
          linear-gradient(#dedede, #dedede) left center / 200px 4px no-repeat;
      }
      input[type="range"]::-webkit-slider-thumb {
        appearance: none;
        width: 24px;
        height: 24px;
        border: 4px solid #000;
        border-radius: 50%;
        background: #fff;
      }
      .pct {
        display: flex;
        align-items: center;
        gap: 12px;
        font-size: 24px;
        font-weight: 400;
        margin: 0 32px 0 18px;
      }
      .zoomer .ico {
        width: 22px;
        height: 22px;
      }
      .ends {
        display: flex;
        gap: 42px;
      }
    `,
  ];
  render() {
    return html`<footer>
      <button aria-label="개요">${icon("mapPin")}</button>
      <button class="slides" aria-label="슬라이드">${icon("slides")}</button>
      <span class="sep"></span>
      <div class="pick"><select aria-label="페이지"><option>페이지-1</option></select>${tri}</div>
      <span class="sep"></span>
      <button class="plus" aria-label="페이지 추가">${icon("plus")}</button>
      <span class="sep"></span>
      <a class="page" href="#">페이지-1</a>
      <span class="sep"></span>
      <div class="right">
        <span class="count">[메인 아이디어 101]</span>
        <div class="views">
          ${["mouse", "map", "pitch", "fit", "expand"].map((n) => html`<button aria-label=${n}>${icon(n)}</button>`)}
        </div>
        <div class="zoomer">
          <button aria-label="축소">${icon("minus")}</button>
          <input type="range" min="0" max="100" value="23" aria-label="확대/축소" />
          <button aria-label="확대">${icon("plus")}</button>
        </div>
        <button class="pct">100%${tri}</button>
        <div class="ends">
          <button aria-label="전체 화면">${icon("full")}</button>
          <button aria-label="너비 맞춤">${icon("wide")}</button>
        </div>
      </div>
    </footer>`;
  }
}

/* ---------- shell ---------- */

@customElement("app-root")
export class AppRoot extends LitElement {
  static styles = [
    base,
    css`
      :host {
        display: flex;
        flex-direction: column;
        height: 100vh;
        background: #f5f5f5;
        overflow: hidden;
      }
      main {
        flex: 1;
        min-height: 0;
        display: grid;
        grid-template-columns: minmax(0, 1fr) 581px;
        grid-template-rows: minmax(0, 1fr);
      }
    `,
  ];
  render() {
    return html`
      <top-bar></top-bar>
      <tool-ribbon></tool-ribbon>
      <main>
        <mind-stage></mind-stage>
        <format-panel></format-panel>
      </main>
      <status-bar></status-bar>
    `;
  }
}
